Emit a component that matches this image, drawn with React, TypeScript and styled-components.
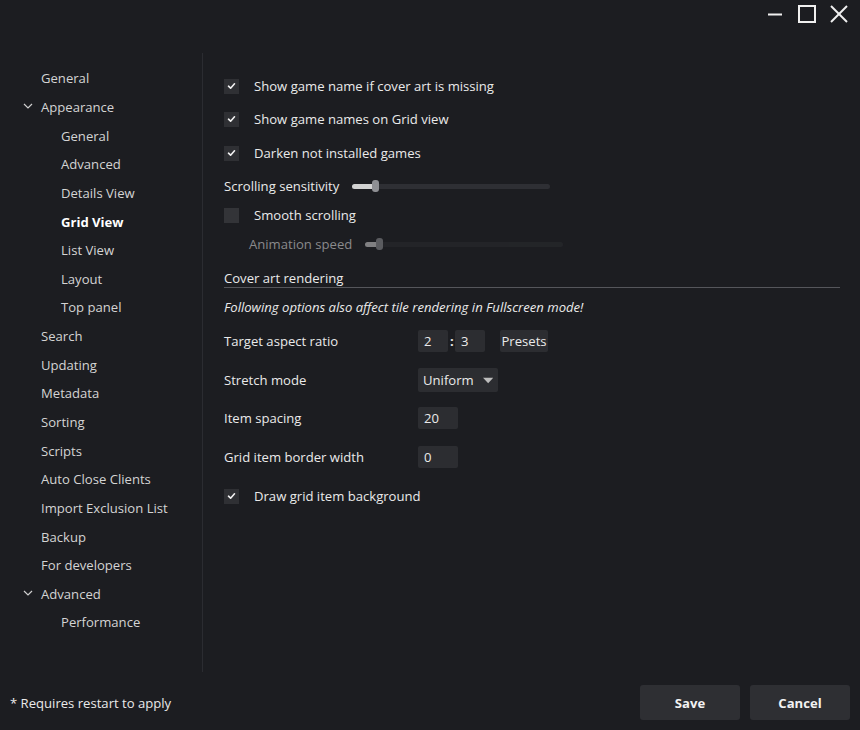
import React from "react";
import styled, { createGlobalStyle, css } from "styled-components";

const GlobalStyle = createGlobalStyle`
  html, body {
    margin: 0;
    padding: 0;
    background: #1c1d21;
  }
  #root {
    width: 860px;
    height: 730px;
  }
  * {
    box-sizing: border-box;
  }
`;

interface NavItem {
  label: string;
  level: 1 | 2;
  expanded?: boolean;
  active?: boolean;
}

const navItems: NavItem[] = [
  { label: "General", level: 1 },
  { label: "Appearance", level: 1, expanded: true },
  { label: "General", level: 2 },
  { label: "Advanced", level: 2 },
  { label: "Details View", level: 2 },
  { label: "Grid View", level: 2, active: true },
  { label: "List View", level: 2 },
  { label: "Layout", level: 2 },
  { label: "Top panel", level: 2 },
  { label: "Search", level: 1 },
  { label: "Updating", level: 1 },
  { label: "Metadata", level: 1 },
  { label: "Sorting", level: 1 },
  { label: "Scripts", level: 1 },
  { label: "Auto Close Clients", level: 1 },
  { label: "Import Exclusion List", level: 1 },
  { label: "Backup", level: 1 },
  { label: "For developers", level: 1 },
  { label: "Advanced", level: 1, expanded: true },
  { label: "Performance", level: 2 },
];

function CheckIcon() {
  return (
    <svg width="9" height="8" viewBox="0 0 9 8">
      <polyline
        points="1.5,4.2 3.6,6.2 7.5,1.8"
        fill="none"
        stroke="#f2f2f2"
        strokeWidth="1.6"
        strokeLinecap="round"
        strokeLinejoin="round"
      />
    </svg>
  );
}

function Chevron() {
  return (
    <svg width="10" height="6" viewBox="0 0 10 6">
      <polyline points="1,1 5,5 9,1" fill="none" stroke="#cfcfcf" strokeWidth="1.2" />
    </svg>
  );
}

function App() {
  return (
    <>
      <GlobalStyle />
      <Window>
        <TitleBar>
          <WinButton>
            <svg width="16" height="16" viewBox="0 0 16 16">
              <line x1="1" y1="8.5" x2="15" y2="8.5" stroke="#f0f0f0" strokeWidth="2" />
            </svg>
          </WinButton>
          <WinButton>
            <svg width="18" height="18" viewBox="0 0 18 18">
              <rect x="1" y="1" width="16" height="16" fill="none" stroke="#f0f0f0" strokeWidth="2" />
            </svg>
          </WinButton>
          <WinButton>
            <svg width="18" height="18" viewBox="0 0 18 18">
              <line x1="1" y1="1" x2="17" y2="17" stroke="#f0f0f0" strokeWidth="2" />
              <line x1="17" y1="1" x2="1" y2="17" stroke="#f0f0f0" strokeWidth="2" />
            </svg>
          </WinButton>
        </TitleBar>

        <Main>
          <Sidebar>
            {navItems.map((item, i) => (
              <NavRow key={i} $level={item.level} $active={item.active}>
                {item.expanded && (
                  <ChevronBox>
                    <Chevron />
                  </ChevronBox>
                )}
                {item.label}
              </NavRow>
            ))}
          </Sidebar>

          <Content>
            <Row $top={21}>
              <CheckBox $checked>
                <CheckIcon />
              </CheckBox>
              <Label>Show game name if cover art is missing</Label>
            </Row>
            <Row $top={9}>
              <CheckBox $checked>
                <CheckIcon />
              </CheckBox>
              <Label>Show game names on Grid view</Label>
            </Row>
            <Row $top={10}>
              <CheckBox $checked>
                <CheckIcon />
              </CheckBox>
              <Label>Darken not installed games</Label>
            </Row>
            <Row $top={9}>
              <Text>Scrolling sensitivity</Text>
              <Slider $width={198} $left={13}>
                <SliderFill style={{ width: 24 }} />
                <SliderThumb style={{ left: 20 }} />
              </Slider>
            </Row>
            <Row $top={5}>
              <CheckBox />
              <Label>Smooth scrolling</Label>
            </Row>
            <Row $top={5} $indent={25}>
              <Text $muted>Animation speed</Text>
              <Slider $width={198} $left={13} $disabled>
                <SliderFill style={{ width: 14 }} />
                <SliderThumb style={{ left: 11 }} />
              </Slider>
            </Row>
            <SectionHeader>Cover art rendering</SectionHeader>
            <Row $top={7}>
              <Note>Following options also affect tile rendering in Fullscreen mode!</Note>
            </Row>
            <Row $top={10}>
              <FieldLabel>Target aspect ratio</FieldLabel>
              <Field $width={30}>2</Field>
              <Colon>:</Colon>
              <Field $width={30}>3</Field>
              <SmallButton>Presets</SmallButton>
            </Row>
            <Row $top={15}>
              <FieldLabel>Stretch mode</FieldLabel>
              <Select>
                Uniform
                <svg width="13" height="7" viewBox="0 0 13 7">
                  <polygon points="0,0 13,0 6.5,7" fill="#bdbdbd" />
                </svg>
              </Select>
            </Row>
            <Row $top={14}>
              <FieldLabel>Item spacing</FieldLabel>
              <Field $width={40}>20</Field>
            </Row>
            <Row $top={15}>
              <FieldLabel>Grid item border width</FieldLabel>
              <Field $width={40}>0</Field>
            </Row>
            <Row $top={15}>
              <CheckBox $checked>
                <CheckIcon />
              </CheckBox>
              <Label>Draw grid item background</Label>
            </Row>
          </Content>
        </Main>

        <Footer>
          <FooterNote>* Requires restart to apply</FooterNote>
          <FooterButtons>
            <DialogButton>Save</DialogButton>
            <DialogButton>Cancel</DialogButton>
          </FooterButtons>
        </Footer>
      </Window>
    </>
  );
}

export default App;

const fontStack = `"Open Sans", "Noto Sans", "Liberation Sans", sans-serif`;

const Window = styled.div`
  display: flex;
  flex-direction: column;
  width: 860px;
  height: 730px;
  background: #1c1d21;
  color: #e6e6e6;
  font-family: ${fontStack};
  font-size: 13.1px;
  overflow: hidden;
`;

const TitleBar = styled.div`
  display: flex;
  justify-content: flex-end;
  align-items: flex-start;
  height: 53px;
  padding: 5px 12px 0 0;
  gap: 14px;
`;

const WinButton = styled.div`
  display: flex;
  align-items: center;
  justify-content: center;
  width: 18px;
  height: 18px;
`;

const Main = styled.div`
  display: flex;
  height: 619px;
`;

const Sidebar = styled.div`
  display: flex;
  flex-direction: column;
  width: 203px;
  padding-top: 11px;
  border-right: 1px solid #2b2c31;
`;

const NavRow = styled.div<{ $level: 1 | 2; $active?: boolean }>`
  position: relative;
  display: flex;
  align-items: center;
  height: 28.65px;
  padding-left: ${({ $level }) => ($level === 1 ? 41 : 61)}px;
  color: #d4d4d4;
  white-space: nowrap;

  ${({ $active }) =>
    $active &&
    css`
      color: #ffffff;
      font-weight: 700;
    `}
`;

const ChevronBox = styled.span`
  position: absolute;
  left: 23px;
  top: 10px;
  display: flex;
`;

const Content = styled.div`
  display: flex;
  flex-direction: column;
  flex: 1;
  padding-left: 21px;
  padding-right: 20px;
`;

const Row = styled.div<{ $top: number; $indent?: number }>`
  display: flex;
  align-items: center;
  height: 24px;
  margin-top: ${({ $top }) => $top}px;
  padding-left: ${({ $indent }) => $indent ?? 0}px;
`;

const CheckBox = styled.div<{ $checked?: boolean }>`
  display: flex;
  align-items: center;
  justify-content: center;
  width: 15px;
  height: 15px;
  background: ${({ $checked }) => ($checked ? "#2f3034" : "#333438")};
  flex-shrink: 0;
`;

const Label = styled.span`
  margin-left: 15px;
  color: #eaeaea;
`;

const Text = styled.span<{ $muted?: boolean }>`
  color: ${({ $muted }) => ($muted ? "#8a8a8c" : "#eaeaea")};
`;

const Slider = styled.div<{ $width: number; $left: number; $disabled?: boolean }>`
  position: relative;
  width: ${({ $width }) => $width}px;
  height: 5px;
  margin-left: ${({ $left }) => $left}px;
  border-radius: 3px;
  background: ${({ $disabled }) => ($disabled ? "#2a2b2f" : "#2e2f34")};
  opacity: ${({ $disabled }) => ($disabled ? 0.55 : 1)};
`;

const SliderFill = styled.div`
  height: 100%;
  border-radius: 3px;
  background: #d2d2d2;
`;

const SliderThumb = styled.div`
  position: absolute;
  top: -4px;
  width: 7px;
  height: 12px;
  border-radius: 3px;
  background: #8e8f93;
`;

const SectionHeader = styled.div`
  display: flex;
  align-items: center;
  height: 19px;
  margin-top: 13px;
  border-bottom: 1px solid #55565b;
  color: #eaeaea;
`;

const Note = styled.span`
  font-style: italic;
  color: #eaeaea;
`;

const FieldLabel = styled.span`
  width: 194px;
  color: #eaeaea;
`;

const fieldBox = css`
  display: flex;
  align-items: center;
  height: 22px;
  padding: 0 6px;
  background: #2c2d31;
  border-radius: 2px;
  color: #eaeaea;
`;

const Field = styled.div<{ $width: number }>`
  ${fieldBox}
  width: ${({ $width }) => $width}px;
`;

const Colon = styled.span`
  width: 7px;
  padding-left: 2px;
  font-weight: 700;
`;

const SmallButton = styled.div`
  ${fieldBox}
  margin-left: 15px;
  padding: 0 3px;
  width: 48px;
  justify-content: center;
`;

const Select = styled.div`
  ${fieldBox}
  height: 24px;
  width: 80px;
  padding: 0 5px;
  gap: 9px;
`;

const Footer = styled.div`
  display: flex;
  align-items: center;
  justify-content: space-between;
  height: 58px;
  padding: 0 10px 0 10px;
`;

const FooterNote = styled.span`
  margin-top: 4px;
  color: #eaeaea;
`;

const FooterButtons = styled.div`
  display: flex;
  gap: 10px;
  margin-top: 3px;
`;

const DialogButton = styled.div`
  display: flex;
  align-items: center;
  justify-content: center;
  width: 100px;
  height: 35px;
  border-radius: 3px;
  background: #2e2f33;
  color: #f2f2f2;
  font-weight: 700;
`;
